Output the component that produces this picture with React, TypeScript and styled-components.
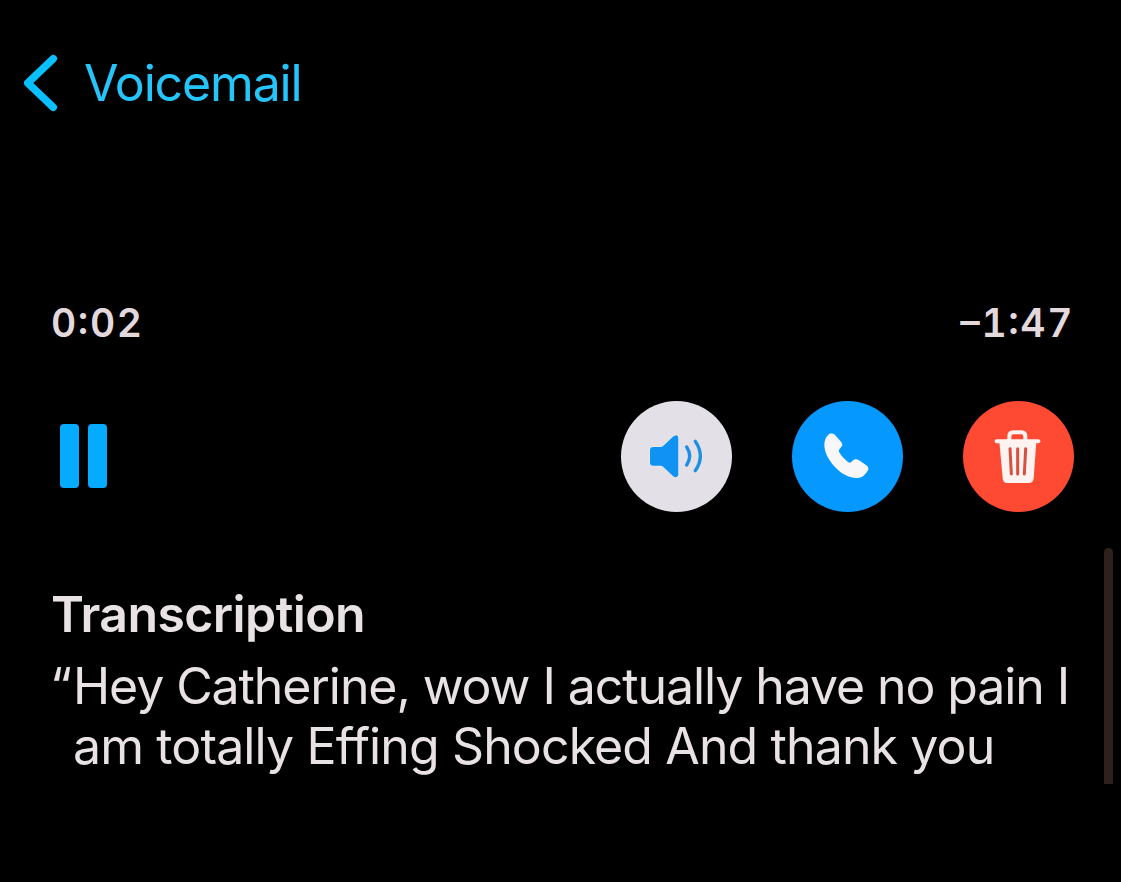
import React from 'react';
import styled, { createGlobalStyle } from 'styled-components';

interface TranscriptLine {
    text: string;
    spacing: number;
    quoted?: boolean;
}

const GlobalStyle = createGlobalStyle`
    * {
        box-sizing: border-box;
    }

    body {
        margin: 0;
        background: #000;
    }
`;

const Screen = styled.main`
    position: relative;
    display: flex;
    flex-direction: column;
    width: 1121px;
    height: 882px;
    padding: 53px 47px 0 52px;
    overflow: hidden;
    background: #000;
    color: #e9e2e5;
    font-family: Inter, 'Liberation Sans', sans-serif;
`;

const BackButton = styled.button`
    display: flex;
    align-items: center;
    gap: 25px;
    height: 60px;
    margin-left: -30px;
    padding: 0;
    border: 0;
    background: none;
    color: #25c5fb;
    font-family: inherit;
    font-size: 50px;
    line-height: 60px;
    letter-spacing: -1.15px;
`;

const Times = styled.div`
    display: flex;
    justify-content: space-between;
    height: 40px;
    margin: 190px 0 0 -1px;
`;

const Time = styled.span`
    font-size: 39px;
    font-weight: 600;
    line-height: 40px;
    letter-spacing: 1.6px;
    font-feature-settings: 'tnum', 'case', 'calt';
    color: #e3d9dc;
`;

const Controls = styled.div`
    display: flex;
    align-items: center;
    justify-content: space-between;
    height: 111px;
    margin-top: 58px;
`;

const PauseButton = styled.button`
    display: flex;
    gap: 9px;
    margin: 0 0 1px 8px;
    padding: 0;
    border: 0;
    background: none;
`;

const PauseBar = styled.span`
    width: 19px;
    height: 64px;
    border-radius: 4px;
    background: #05abff;
`;

const Actions = styled.div`
    display: flex;
    gap: 60px;
`;

const RoundButton = styled.button<{ $color: string }>`
    display: flex;
    align-items: center;
    justify-content: center;
    width: 111px;
    height: 111px;
    padding: 0;
    border: 0;
    border-radius: 50%;
    background: ${({ $color }) => $color};
`;

const Heading = styled.h1`
    margin: 72px 0 0 -1px;
    font-size: 50px;
    font-weight: 600;
    line-height: 60px;
    letter-spacing: -0.6px;
`;

const Transcript = styled.p`
    margin: 12px 0 0 21px;
    font-size: 50px;
    line-height: 60px;
    font-feature-settings: 'calt' 0, 'liga' 0;
    white-space: nowrap;
`;

const Line = styled.span<{ $spacing: number }>`
    display: block;
    letter-spacing: ${({ $spacing }) => $spacing}px;
`;

const Quote = styled.span`
    display: inline-block;
    width: 23px;
    margin-left: -23px;
`;

const ScrollThumb = styled.div`
    position: absolute;
    top: 548px;
    right: 8px;
    width: 9px;
    height: 236px;
    border-radius: 5px 5px 0 0;
    background: #2e201c;
`;

const lines: TranscriptLine[] = [
    { text: 'Hey Catherine, wow I actually have no pain I', spacing: -1.09, quoted: true },
    { text: 'am totally Effing Shocked And thank you', spacing: -0.87 },
];

const ChevronIcon = () => (
    <svg width="37" height="60" viewBox="0 0 37 60" fill="none">
        <path
            d="M31.2 5.7 5.8 30l25.4 24.3"
            stroke="#08bfff"
            strokeWidth="7.6"
            strokeLinecap="round"
            strokeLinejoin="round"
        />
    </svg>
);

const SpeakerIcon = () => (
    <svg width="60" height="60" viewBox="0 0 180 180" fill="none">
        <path
            d="M19 60H40Q45 60 49 56L77 30Q84 24 89 25Q94 27 94 34V142Q94 149 89 150Q84 152 77 146L49 120Q45 116 40 116H19Q9 116 9 107V69Q9 60 19 60Z"
            fill="#1092f5"
            stroke="#f3f6fc"
            strokeWidth="3"
            paintOrder="stroke"
        />
        <path d="M119 60Q137 87 119 114" stroke="#1b8fe6" strokeWidth="10" strokeLinecap="round" />
        <path d="M145 43Q175 87 145 131" stroke="#1b8fe6" strokeWidth="10" strokeLinecap="round" />
    </svg>
);

const PhoneIcon = () => (
    <svg width="60" height="60" viewBox="0 0 180 180">
        <path
            d="M31 23C36 18 46 18 51 24L69 44C75 51 74 57 69 61L65 66C62 69 62 73 64 76C70 88 80 97 90 105C94 108 97 108 100 105L105 100C110 96 117 96 123 100L145 115C152 120 153 126 149 131C141 145 131 153 116 153C95 153 72 142 54 123C34 102 19 78 19 53C19 40 24 29 31 23Z"
            fill="#f7f7fa"
        />
    </svg>
);

const TrashIcon = () => (
    <svg width="60" height="60" viewBox="0 0 180 180" fill="none">
        <path d="M61 42V28Q61 16 73 16H97Q109 16 109 28V42" stroke="#fff3f1" strokeWidth="12" />
        <path d="M23 43H148" stroke="#fff3f1" strokeWidth="12" strokeLinecap="round" />
        <path
            d="M31 43H142L134 153Q133 168 119 168H54Q42 168 41 153Z"
            fill="#fff3f1"
        />
        <path
            d="M63 65L67 141M86 65V141M110 65L106 141"
            stroke="#d6503f"
            strokeWidth="9"
            strokeLinecap="round"
        />
    </svg>
);

const App = () => {
    return (
        <>
            <GlobalStyle />
            <Screen>
                <BackButton>
                    <ChevronIcon />
                    Voicemail
                </BackButton>
                <Times>
                    <Time>0:02</Time>
                    <Time>–1:47</Time>
                </Times>
                <Controls>
                    <PauseButton aria-label="Pause">
                        <PauseBar />
                        <PauseBar />
                    </PauseButton>
                    <Actions>
                        <RoundButton $color="#e4e0e8" aria-label="Speaker">
                            <SpeakerIcon />
                        </RoundButton>
                        <RoundButton $color="#0598ff" aria-label="Call back">
                            <PhoneIcon />
                        </RoundButton>
                        <RoundButton $color="#ff4a33" aria-label="Delete">
                            <TrashIcon />
                        </RoundButton>
                    </Actions>
                </Controls>
                <Heading>Transcription</Heading>
                <Transcript>
                    {lines.map((line) => (
                        <Line key={line.text} $spacing={line.spacing}>
                            {line.quoted && <Quote>“</Quote>}
                            {line.text}
                        </Line>
                    ))}
                </Transcript>
                <ScrollThumb />
            </Screen>
        </>
    );
};

export default App;
